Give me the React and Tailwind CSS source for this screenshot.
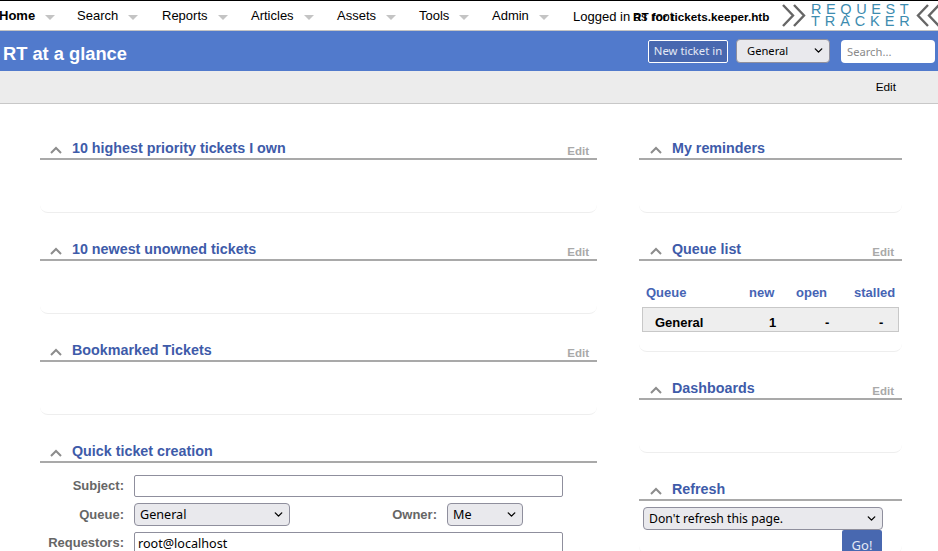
import { ChevronDown } from 'lucide-react';

const menuItems = [
  { label: 'Home', width: 'w-[78px]', bold: true },
  { label: 'Search', width: 'w-[85px]' },
  { label: 'Reports', width: 'w-[89px]' },
  { label: 'Articles', width: 'w-[86px]' },
  { label: 'Assets', width: 'w-[82px]' },
  { label: 'Tools', width: 'w-[73px]' },
  { label: 'Admin', width: 'w-[81px]' },
];

const Chevrons = ({ flip }) => (
  <svg width="24" height="24" viewBox="0 0 24 24" className={flip ? 'shrink-0 -scale-x-100' : 'shrink-0'}>
    <path d="M1 2 L11 12.5 L1 23 M12 2 L22 12.5 L12 23" fill="none" stroke="#666666" strokeWidth="2.4" />
  </svg>
);

const Caret = () => (
  <svg width="12" height="8" viewBox="0 0 12 8" className="shrink-0 mr-[10px] mb-[3px]">
    <path d="M1 7 L6 2 L11 7" fill="none" stroke="#8c8c8c" strokeWidth="2" />
  </svg>
);

const Select = ({ value, width, height = 'h-[23px]', text = 'text-[12.6px]', pad = 'pl-[5px] pt-[2px]' }) => (
  <div className={`relative ${width}`}>
    <select className={`w-full ${height} ${text} ${pad} appearance-none rounded-[4px] border border-[#8f8f9d] bg-[#e9e9ed] text-black [font-family:'Noto_Sans',sans-serif]`}>
      <option>{value}</option>
    </select>
    <ChevronDown size={13} strokeWidth={2.5} className="absolute right-[5px] top-[5px] text-black pointer-events-none" />
  </div>
);

const Widget = ({ title, edit = true, right = false, height = 'h-[53px]', children }) => (
  <section className="mb-[28px]">
    <div className={`flex items-end h-[20px] border-b-2 border-[#a9a9a9] pb-[1px] ${right ? 'pl-[11px]' : 'pl-[10px]'}`}>
      <Caret />
      <h2 className="flex-1 text-[14.3px] leading-[18px] font-bold text-[#3e5ba9]">{title}</h2>
      {edit && <span className="text-[11.5px] leading-[14px] font-bold text-[#a9a9a9] mr-[8px] -mb-[1px]">Edit</span>}
    </div>
    <div className={`${height} flow-root rounded-b-[8px] border-b border-[#eeeeee]`}>{children}</div>
  </section>
);

const Label = ({ children, width = 'w-[84px]' }) => (
  <label className={`${width} text-right text-[13px] font-bold text-[#666666]`}>{children}</label>
);

const App = () => {
  return (
    <div className="h-[551px] w-[938px] overflow-hidden bg-white text-[13px] text-black [font-family:'Liberation_Sans',Arial,sans-serif]">
      {/* Top menu */}
      <div className="relative flex items-center h-[31px] border-t border-t-black border-b border-b-[#c4c4c4]">
        <nav className="flex items-center -ml-[1px]">
          {menuItems.map(item => (
            <div key={item.label} className={`flex items-center shrink-0 ${item.width}`}>
              <span className={item.bold ? 'font-bold' : ''}>{item.label}</span>
              <svg width="10" height="5" viewBox="0 0 10 5" className="ml-[10px] mt-[3px]">
                <path d="M0 0 H10 L5 5 Z" fill="#c4c4c4" />
              </svg>
            </div>
          ))}
        </nav>
        <span className="absolute left-[573px] top-[6px]">Logged in as root</span>
        <span className="absolute left-[633px] top-[7px] text-[11.7px] font-bold">RT for tickets.keeper.htb</span>
        <div className="absolute left-[782px] top-[2px] flex items-center gap-[5px] w-[156px]">
          <Chevrons />
          <div className="w-[100px] shrink-0 whitespace-nowrap text-[#3d8cb0] text-[14.5px] leading-[12px]">
            <div className="tracking-[4.6px]">REQUEST</div>
            <div className="tracking-[4.9px]">TRACKER</div>
          </div>
          <Chevrons flip />
        </div>
      </div>

      {/* Page title */}
      <div className="flex items-center h-[40px] bg-[#517acc] pl-[3px]">
        <h1 className="flex-1 mt-[6px] text-[18.3px] font-bold text-white">RT at a glance</h1>
        <button className="h-[23px] w-[80px] rounded-[2px] border border-white bg-[#4868b0] text-[11.3px] text-[#e4e9f5] [font-family:'Noto_Sans',sans-serif]">New ticket in</button>
        <Select value="General" width="w-[94px] ml-[8px]" height="h-[24px]" text="text-[11.2px]" pad="pl-[10px]" />
        <input
          placeholder="Search..."
          className="ml-[11px] mr-[3px] h-[23px] w-[94px] rounded-[4px] bg-white pl-[6px] text-[11.2px] placeholder:text-[#8a8a8a] [font-family:'Noto_Sans',sans-serif]"
        />
      </div>

      {/* Page menu */}
      <div className="flex items-center justify-end h-[33px] bg-[#ececec] border-b border-[#c8c8c8] pr-[42px] pt-[1px]">
        <span className="text-[11.8px]">Edit</span>
      </div>

      {/* Dashboard */}
      <div className="flex pt-[36px] pl-[40px]">
        <div className="w-[557px] mr-[42px] shrink-0">
          <Widget title="10 highest priority tickets I own" />
          <Widget title="10 newest unowned tickets" />
          <Widget title="Bookmarked Tickets" />
          <Widget title="Quick ticket creation" edit={false} height="h-[100px]">
            <div className="flex items-center mt-[12px] h-[22px]">
              <Label>Subject:</Label>
              <input className="ml-[10px] h-[22px] w-[429px] rounded-[2px] border border-[#8f8f9d]" />
            </div>
            <div className="flex items-center mt-[6px] h-[23px]">
              <Label>Queue:</Label>
              <Select value="General" width="w-[156px] ml-[10px]" />
              <Label width="w-[147px]">Owner:</Label>
              <Select value="Me" width="w-[76px] ml-[10px]" />
            </div>
            <div className="flex items-center mt-[6px] h-[22px]">
              <Label>Requestors:</Label>
              <input
                defaultValue="root@localhost"
                className="ml-[10px] h-[22px] w-[429px] rounded-[2px] border border-[#8f8f9d] pl-[3px] text-[12.6px] [font-family:'Noto_Sans',sans-serif]"
              />
            </div>
          </Widget>
        </div>

        <div className="w-[263px] shrink-0">
          <Widget title="My reminders" edit={false} right />
          <Widget title="Queue list" height="h-[91px]" right>
            <div className="flex mt-[22px] pl-[7px] text-[13px] font-bold text-[#4664b4]">
              <span className="w-[103px]">Queue</span>
              <span className="w-[47px]">new</span>
              <span className="w-[58px]">open</span>
              <span>stalled</span>
            </div>
            <div className="flex items-center ml-[3px] mt-[4px] h-[25px] w-[257px] border border-[#c8c8c8] bg-[#eeeeee] pt-[8px] font-bold">
              <span className="ml-[12px] w-[114px]">General</span>
              <span className="w-[10px]">1</span>
              <span className="ml-[46px] w-[10px]">-</span>
              <span className="ml-[44px]">-</span>
            </div>
          </Widget>
          <Widget title="Dashboards" right />
          <Widget title="Refresh" edit={false} right>
            <div className="mt-[6px] ml-[4px]">
              <Select value="Don't refresh this page." width="w-[240px]" text="text-[12.2px]" />
            </div>
            <div className="flex justify-end w-[243px]">
              <button className="h-[32px] w-[40px] rounded-[2px] bg-[#4868b0] text-[13px] text-[#e4e9f5] [font-family:'Noto_Sans',sans-serif]">Go!</button>
            </div>
          </Widget>
        </div>
      </div>
    </div>
  );
};

export default App;
